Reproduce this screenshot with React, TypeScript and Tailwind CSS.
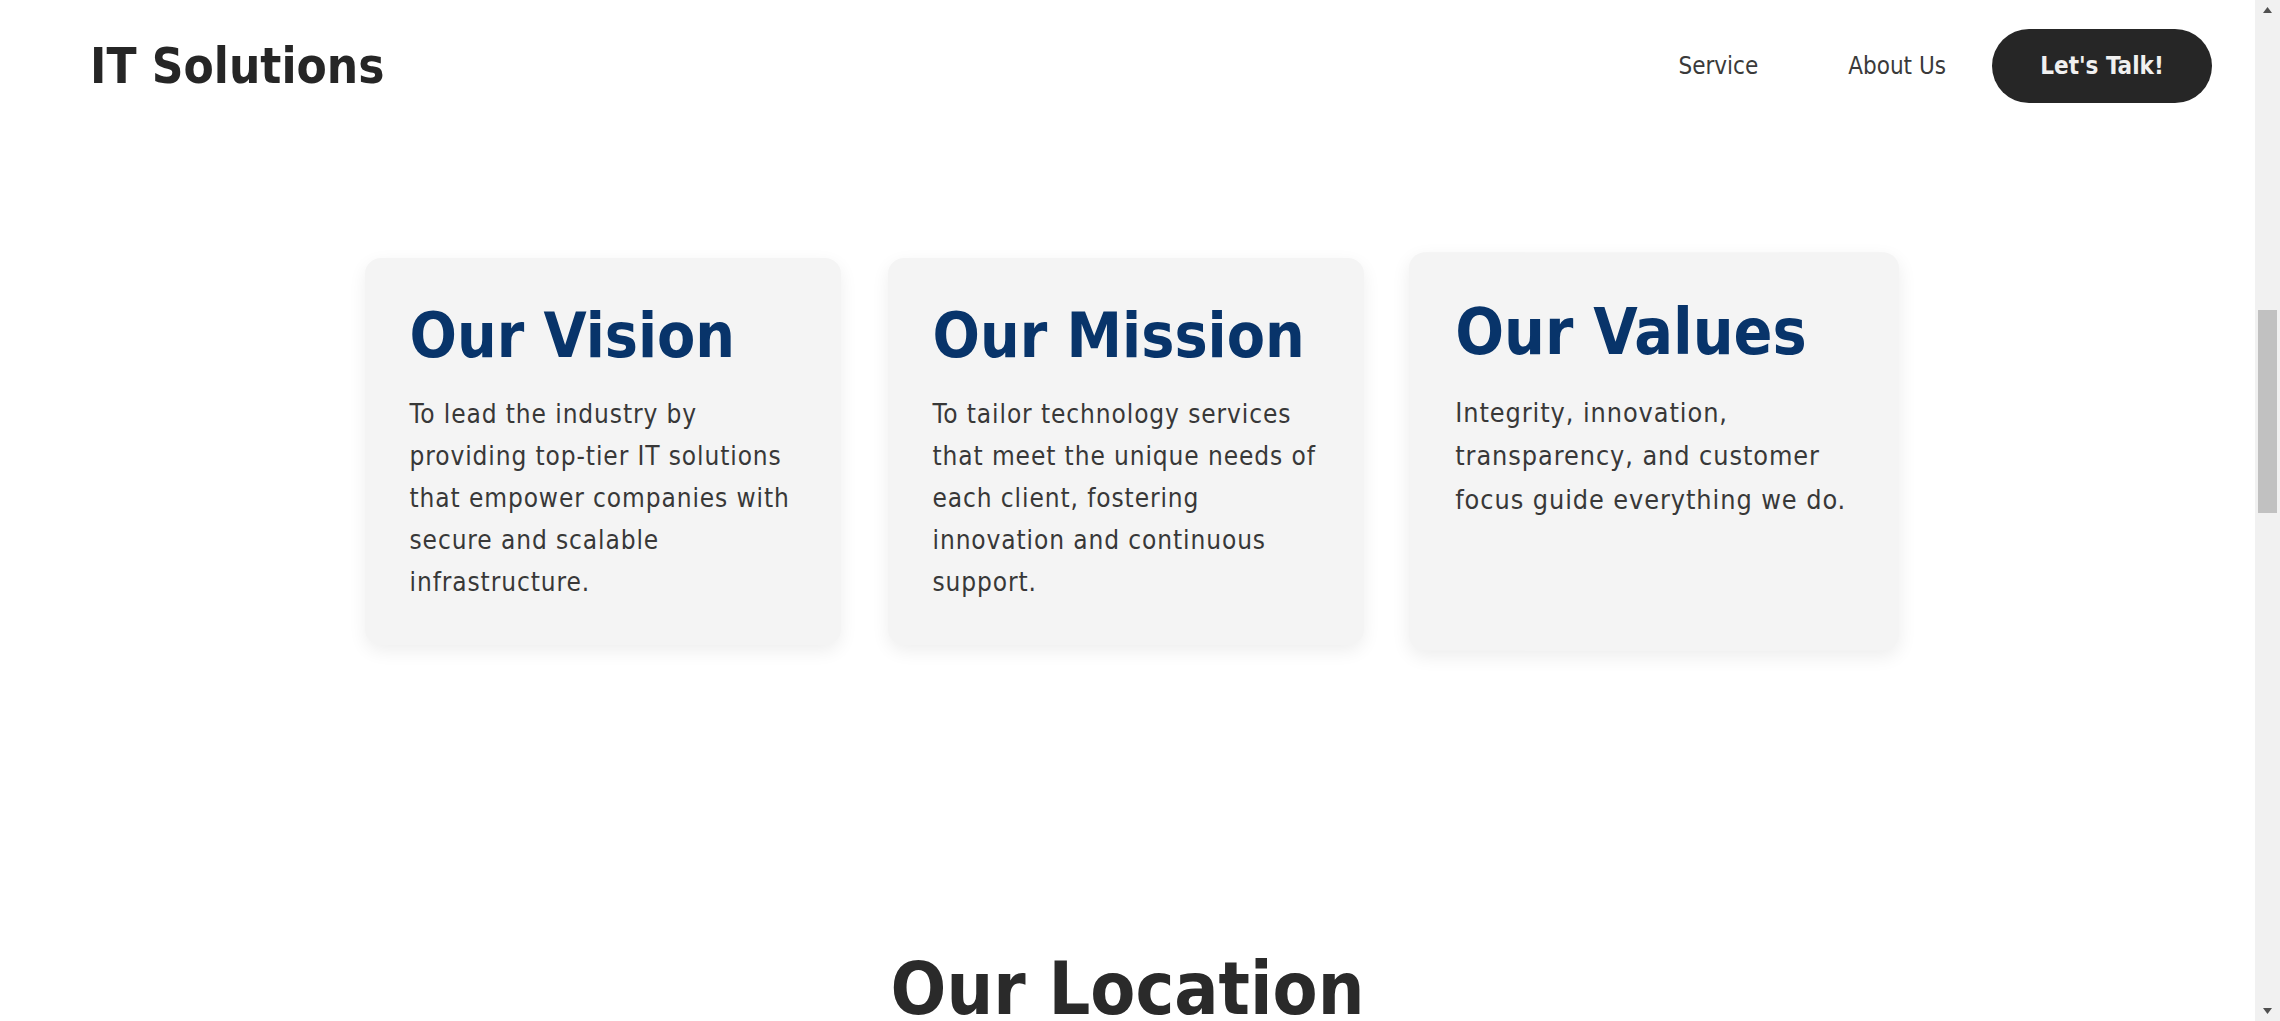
import React from "react"

const cards = [
  {
    title: "Our Vision",
    body: "To lead the industry by providing top-tier IT solutions that empower companies with secure and scalable infrastructure.",
    extra: "",
  },
  {
    title: "Our Mission",
    body: "To tailor technology services that meet the unique needs of each client, fostering innovation and continuous support.",
    extra: "",
  },
  {
    title: "Our Values",
    body: "Integrity, innovation, transparency, and customer focus guide everything we do.",
    extra: "scale-[1.03] translate-x-[5px]",
  },
]

function Scrollbar() {
  return (
    <div className="w-[25px] shrink-0 bg-[#f1f1f1] flex flex-col items-center">
      <div className="h-[20px] flex items-center justify-center">
        <svg width="9" height="6" viewBox="0 0 9 6">
          <polygon points="4.5,0 9,6 0,6" fill="#505050" />
        </svg>
      </div>
      <div className="h-[290px]" />
      <div className="w-[19px] h-[203px] bg-[#c1c1c1]" />
      <div className="flex-1" />
      <div className="h-[20px] flex items-center justify-center">
        <svg width="9" height="6" viewBox="0 0 9 6">
          <polygon points="0,0 9,0 4.5,6" fill="#505050" />
        </svg>
      </div>
    </div>
  )
}

export default function App() {
  return (
    <div className="flex h-screen w-full overflow-hidden bg-white font-['DejaVu_Sans_Condensed','DejaVu_Sans',sans-serif] font-stretch-condensed">
      <div className="flex-1 min-w-0 flex flex-col">
        {/* Header */}
        <header className="h-[132px] shrink-0 flex items-center justify-between pl-[90px] pr-[43px]">
          <div className="text-[49px] font-bold text-[#262626] leading-none">IT Solutions</div>
          <nav className="flex items-center">
            <a className="text-[24px] text-[#3a3a3a] mr-[90px]">Service</a>
            <a className="text-[24px] text-[#3a3a3a] mr-[46px]">About Us</a>
            <button className="w-[220px] h-[74px] rounded-full bg-[#262626] text-[#f0f0f0] text-[24px] font-bold">
              Let's Talk!
            </button>
          </nav>
        </header>

        {/* Cards */}
        <section className="mt-[126px] flex justify-center pr-[4px]">
          <div className="grid grid-cols-[476px_476px_476px] gap-[47px]">
            {cards.map((card) => (
              <div
                key={card.title}
                className={`bg-[#f4f4f4] rounded-2xl shadow-[0_6px_18px_rgba(0,0,0,0.07)] pl-[45px] pr-[38px] pt-[41px] pb-[42px] ${card.extra}`}
              >
                <h2 className="text-[62px] font-bold leading-[1.2] text-[#08346a]">{card.title}</h2>
                <p className="mt-[20px] text-[26px] leading-[42px] tracking-[0.9px] text-[#383838]">{card.body}</p>
              </div>
            ))}
          </div>
        </section>

        {/* Location */}
        <section className="mt-[307px] flex justify-center">
          <h2 className="text-[73px] font-bold leading-none text-[#2a2a2a]">Our Location</h2>
        </section>
      </div>
      <Scrollbar />
    </div>
  )
}
